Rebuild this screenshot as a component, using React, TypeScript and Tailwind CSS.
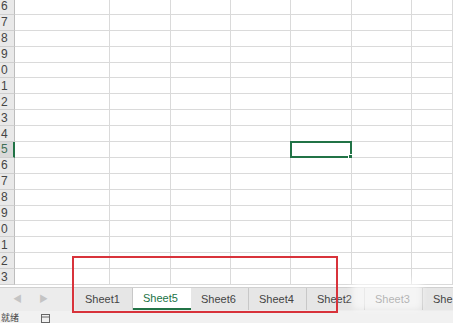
import React from 'react';

const rowLabels = ['6', '7', '8', '9', '0', '1', '2', '3', '4', '5', '6', '7', '8', '9', '0', '1', '2', '3'];
const colWidths = [95, 61, 60, 60, 61, 60, 41];
const sheets = ['Sheet1', 'Sheet5', 'Sheet6', 'Sheet4', 'Sheet2', 'Sheet3', 'Sheet7'];
const activeRow = 9;
const activeCol = 4;

function Cell({ selected }: { selected: boolean }) {
  return (
    <div className="relative h-full border-r border-b border-[#dadada]">
      {selected && (
        <div className="absolute -left-px -top-px -right-px -bottom-px border-2 border-[#217346]">
          <div className="absolute -right-[3px] -bottom-[3px] h-[5px] w-[5px] bg-[#217346] border border-white" />
        </div>
      )}
    </div>
  );
}

export default function App() {
  return (
    <div
      className="relative flex h-[323px] w-[453px] flex-col overflow-hidden bg-white"
      style={{ fontFamily: '"Liberation Sans", "Noto Sans CJK SC", sans-serif' }}
    >
      {/* Grid */}
      <div className="h-[287px] shrink-0 overflow-hidden">
        <div className="-mt-px">
          {rowLabels.map((label, r) => (
            <div
              key={r}
              className="grid h-[15.9px]"
              style={{ gridTemplateColumns: `15px ${colWidths.map((w) => w + 'px').join(' ')}` }}
            >
              <div
                className={
                  'flex h-full items-center pl-[1px] text-[12px] leading-none border-b border-[#cfcfcf] ' +
                  (r === activeRow
                    ? 'border-r-2 border-r-[#217346] text-[#3f6f55] bg-[#d9d9d9]'
                    : 'border-r border-r-[#bdbdbd] text-[#444] bg-[#e9e9e9]')
                }
              >
                {label}
              </div>
              {colWidths.map((_, c) => (
                <Cell key={c} selected={r === activeRow && c === activeCol} />
              ))}
            </div>
          ))}
        </div>
      </div>

      {/* Sheet tabs */}
      <div className="flex h-[24px] shrink-0 overflow-hidden border-t border-[#d0d0d0] bg-[#ececec]">
        <div className="flex w-[75px] shrink-0 items-center gap-[17px] pl-[13px] text-[9px] text-[#c4c4c4]">
          <span>◀</span>
          <span>▶</span>
        </div>
        {sheets.map((name, i) => (
          <div
            key={name}
            className={
              'flex h-[22px] w-[58px] shrink-0 items-center pl-[10px] text-[11px] ' +
              (i === 1
                ? 'bg-white text-[#217346] border-b-2 border-[#217346]'
                : 'bg-[#e6e6e6] text-[#444] border-r border-[#c8c8c8]')
            }
          >
            {name === 'Sheet7' ? 'She' : name}
          </div>
        ))}
      </div>

      {/* Status bar */}
      <div className="flex flex-1 items-start gap-[22px] bg-[#f1f1f1] pl-[1px] pt-[3px] text-[9px] leading-none text-[#444]">
        <span>就绪</span>
        <svg width="9" height="9" viewBox="0 0 9 9">
          <rect x="0.5" y="0.5" width="8" height="8" fill="none" stroke="#666" />
          <line x1="0.5" y1="3" x2="8.5" y2="3" stroke="#666" />
        </svg>
      </div>

      {/* Annotation box */}
      <div className="pointer-events-none absolute left-[72px] top-[256px] h-[57px] w-[266px] border-2 border-[#d8333b]" />

      {/* Watermark haze */}
      <div className="pointer-events-none absolute left-[352px] top-[280px] h-[30px] w-[70px] rounded-md bg-white/60 blur-[3px]" />
    </div>
  );
}
